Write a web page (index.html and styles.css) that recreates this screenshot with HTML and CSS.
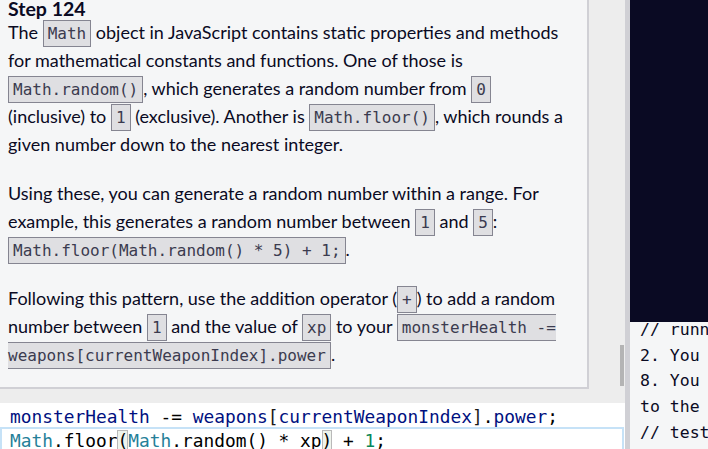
FILE: index.html
```html
<!DOCTYPE html>
<html>
<head>
<meta charset="utf-8">
<link rel="stylesheet" href="styles.css">
</head>
<body>
<div class="app">
  <div class="left">
    <div class="top">
      <div class="desc">
        <h3 class="step">Step 124</h3>
        <p>The <code>Math</code> object in JavaScript contains static properties and methods for mathematical constants and functions. One of those is <code>Math.random()</code>, which generates a random number from <code>0</code> (inclusive) to <code>1</code> (exclusive). Another is <code>Math.floor()</code>, which rounds a given number down to the nearest integer.</p>
        <p>Using these, you can generate a random number within a range. For example, this generates a random number between <code>1</code> and <code>5</code>: <code>Math.floor(Math.random() * 5) + 1;</code>.</p>
        <p>Following this pattern, use the addition operator (<code>+</code>) to add a random number between <code>1</code> and the value of <code>xp</code> to your <code>monsterHealth -= weapons[currentWeaponIndex].power</code>.</p>
      </div>
      <div class="track"><div class="thumb"></div></div>
    </div>
    <div class="editor">
      <div class="line l1"><span class="v">monsterHealth</span> -= <span class="v">weapons</span><span class="br">[</span><span class="v">currentWeaponIndex</span><span class="br">]</span>.<span class="v">power</span>;</div>
      <div class="line l2 current"><span class="t">Math</span>.floor<span class="match">(</span><span class="t">Math</span>.random() * xp<span class="match">)</span> + <span class="n">1</span>;</div>
    </div>
  </div>
  <div class="divider"></div>
  <div class="right">
    <div class="preview"></div>
    <div class="console">
      <div class="console-inner">
        <div class="cl">// running tests</div>
        <div class="cl">2. You should</div>
        <div class="cl">8. You should</div>
        <div class="cl">to the value</div>
        <div class="cl">// tests completed</div>
      </div>
    </div>
  </div>
</div>
</body>
</html>
```

FILE: styles.css
```css
html, body {
  margin: 0;
  padding: 0;
}
body {
  width: 708px;
  height: 449px;
  overflow: hidden;
  font-family: Lato, "Liberation Sans", sans-serif;
  color: #0a0a23;
}
.app {
  display: flex;
  height: 449px;
}
.left {
  width: 625px;
  flex: none;
  display: flex;
  flex-direction: column;
  background: #ededed;
  overflow: hidden;
}
.top {
  height: 403px;
  flex: none;
  display: flex;
}
.desc {
  box-sizing: border-box;
  width: 589px;
  height: 389px;
  flex: none;
  background: #f5f6f7;
  border-right: 2px solid #d0d0d5;
  border-bottom: 2px solid #d0d0d5;
  padding: 0 15px 0 8px;
  font-size: 18px;
  line-height: 28px;
  overflow: hidden;
}
.step {
  margin: 0;
  font-size: 19.5px;
  line-height: 18px;
  font-weight: 700;
}
.desc p {
  margin: 0 0 21px;
}
code {
  font-family: "DejaVu Sans Mono", monospace;
  font-size: 16px;
  line-height: 1;
  background: #dfdfe2;
  border: 1px solid #858591;
  padding: 3px 4px 3px;
  color: #3b3b4f;
}
.track {
  flex: 1;
  padding-left: 31px;
  padding-top: 345px;
  box-sizing: border-box;
}
.thumb {
  width: 4px;
  height: 41px;
  background: #b4b4b4;
}
.editor {
  flex: 1;
  background: #fff;
  font-family: "DejaVu Sans Mono", monospace;
  font-size: 17.85px;
  line-height: 24px;
  color: #000;
}
.line {
  height: 24px;
  padding-left: 10px;
  white-space: pre;
}
.l1 {
  padding-top: 1px;
  height: 23px;
  line-height: 25px;
}
.current {
  box-sizing: border-box;
  width: 624px;
  height: 26px;
  padding-left: 8px;
  border: 2px solid #c6e2f7;
  border-bottom: none;
}
.v { color: #001080; }
.t { color: #267f99; }
.n { color: #098658; }
.br { color: #1a1a1a; }
.match {
  background: #eef3ec;
  box-shadow: inset 0 0 0 1px #b9b9b9;
}
.divider {
  width: 5px;
  flex: none;
  background: #d0d0d5;
}
.right {
  flex: 1;
  display: flex;
  flex-direction: column;
  overflow: hidden;
}
.preview {
  height: 322px;
  flex: none;
  background: #0a0a23;
}
.console {
  flex: 1;
  background: #f5f6f7;
  padding-left: 10px;
  font-family: "DejaVu Sans Mono", monospace;
  font-size: 16.5px;
  line-height: 25.7px;
  color: #0a0a23;
  overflow: hidden;
}
.console-inner {
  margin-top: -5px;
}
.cl {
  white-space: pre;
}
```
